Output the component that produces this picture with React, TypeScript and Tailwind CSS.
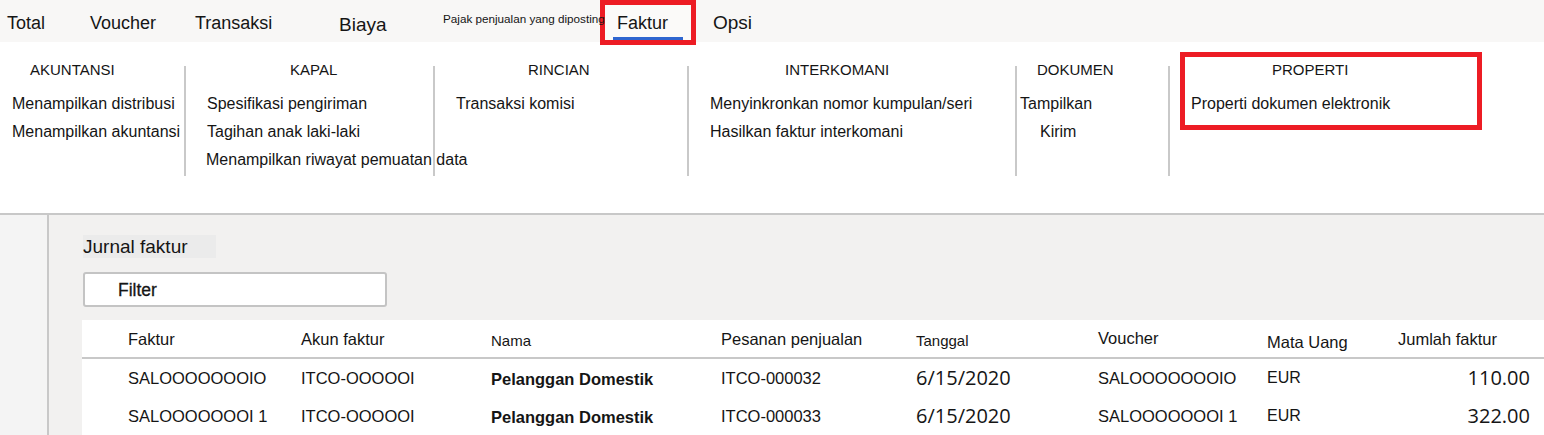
import { ReactNode } from 'react';

type Group = {
    title: string;
    width: number;
    titlePad: number;
    items: { label: string; pad: number }[];
};

const tabs = [
    { label: 'Total', w: 'w-[83px]', size: 'text-[18px] pt-[13px]' },
    { label: 'Voucher', w: 'w-[105px]', size: 'text-[18px] pt-[13px]' },
    { label: 'Transaksi', w: 'w-[144px]', size: 'text-[18px] pt-[13px]' },
    { label: 'Biaya', w: 'w-[104px]', size: 'text-[19px] pt-[15px]' },
];

const groups: Group[] = [
    {
        title: 'AKUNTANSI', width: 184, titlePad: 30,
        items: [
            { label: 'Menampilkan distribusi', pad: 12 },
            { label: 'Menampilkan akuntansi', pad: 12 },
        ],
    },
    {
        title: 'KAPAL', width: 247, titlePad: 104,
        items: [
            { label: 'Spesifikasi pengiriman', pad: 21 },
            { label: 'Tagihan anak laki-laki', pad: 21 },
            { label: 'Menampilkan riwayat pemuatan data', pad: 20 },
        ],
    },
    {
        title: 'RINCIAN', width: 252, titlePad: 93,
        items: [{ label: 'Transaksi komisi', pad: 21 }],
    },
    {
        title: 'INTERKOMANI', width: 326, titlePad: 96,
        items: [
            { label: 'Menyinkronkan nomor kumpulan/seri', pad: 21 },
            { label: 'Hasilkan faktur interkomani', pad: 21 },
        ],
    },
    {
        title: 'DOKUMEN', width: 151, titlePad: 20,
        items: [
            { label: 'Tampilkan', pad: 3 },
            { label: 'Kirim', pad: 23 },
        ],
    },
];

const columns = ['Faktur', 'Akun faktur', 'Nama', 'Pesanan penjualan', 'Tanggal', 'Voucher', 'Mata Uang', 'Jumlah faktur'];

const rows = [
    { faktur: 'SALOOOOOOOIO', akun: 'ITCO-OOOOOI', nama: 'Pelanggan Domestik', pesanan: 'ITCO-000032', tanggal: '6/15/2020', voucher: 'SALOOOOOOOIO', uang: 'EUR', jumlah: '110.00' },
    { faktur: 'SALOOOOOOOI 1', akun: 'ITCO-OOOOOI', nama: 'Pelanggan Domestik', pesanan: 'ITCO-000033', tanggal: '6/15/2020', voucher: 'SALOOOOOOOI 1', uang: 'EUR', jumlah: '322.00' },
];

function Divider() {
    return <div className="w-[2px] h-[110px] mt-[15px] bg-[#c9c9c9] shrink-0" />;
}

function Cell({ children, className = '' }: { children: ReactNode; className?: string }) {
    return <div className={`flex items-center whitespace-nowrap ${className}`}>{children}</div>;
}

export default function App() {
    const grid = 'grid grid-cols-[173px_190px_230px_195px_182px_169px_131px_132px] pl-[46px]';

    return (
        <div className="w-[1544px] h-[435px] overflow-hidden bg-white text-[#151515] font-['Liberation_Sans',Arial,sans-serif]">
            {/* tab strip */}
            <div className="h-[42px] bg-[#f8f7f6] flex items-start pl-[7px]">
                {tabs.map((t) => (
                    <div key={t.label} className={`${t.w} ${t.size} h-[42px] leading-[20px] shrink-0`}>{t.label}</div>
                ))}
                <div className="relative z-20 w-[157px] shrink-0 pt-[12px] text-[11.7px] leading-[14px] whitespace-nowrap">Pajak penjualan yang diposting</div>
                <div className="relative z-10 w-[96px] h-[45px] shrink-0 border-[5px] border-[#ed1c24] bg-[#fbfaf9] flex flex-col">
                    <div className="pl-[12px] pt-[8px] text-[18px] leading-[20px]">Faktur</div>
                    <div className="mt-auto mx-[8px] h-[3px] bg-[#2f66d0]" />
                </div>
                <div className="ml-[17px] pt-[13px] text-[19px] leading-[20px]">Opsi</div>
            </div>

            {/* ribbon */}
            <div className="h-[171px] flex items-start pt-[9px] text-[16px]">
                {groups.map((g, i) => (
                    <div key={g.title} className="flex items-start shrink-0">
                        {i > 0 && <Divider />}
                        <div className="flex flex-col pt-[9px]" style={{ width: g.width }}>
                            <div className="text-[15px] leading-[20px] uppercase" style={{ paddingLeft: g.titlePad }}>{g.title}</div>
                            <div className="mt-[10px] flex flex-col">
                                {g.items.map((it) => (
                                    <div key={it.label} className="leading-[28px] whitespace-nowrap" style={{ paddingLeft: it.pad }}>{it.label}</div>
                                ))}
                            </div>
                        </div>
                    </div>
                ))}
                <Divider />
                <div className="ml-[10px] mt-[1px] w-[302px] h-[78px] border-[5px] border-[#ed1c24] flex flex-col pt-[3px]">
                    <div className="pl-[87px] text-[15px] leading-[20px]">PROPERTI</div>
                    <div className="mt-[10px] pl-[6px] leading-[28px] whitespace-nowrap">Properti dokumen elektronik</div>
                </div>
            </div>

            {/* page body */}
            <div className="h-[222px] border-t-2 border-[#c8c8c8] bg-[#f2f1f0] flex">
                <div className="w-[49px] shrink-0 bg-[#f4f4f4] border-r-2 border-[#c8c8c8]" />
                <div className="flex-1 flex flex-col pl-[33px] pt-[20px]">
                    <div className="w-[133px] h-[23px] ml-[1px] bg-[#ebebeb] text-[19px] leading-[23px]">Jurnal faktur</div>
                    <div className="mt-[14px] ml-[1px] w-[304px] h-[35px] rounded-[3px] border-2 border-[#c4c4c4] bg-white pl-[33px] text-[17.5px] leading-[33px] [-webkit-text-stroke:0.3px_#151515]">Filter</div>
                    <div className="mt-[13px] bg-white flex-1">
                        <div className={`${grid} h-[39px] pt-[2px] border-b-2 border-[#c8c8c8] text-[16.5px]`}>
                            {columns.map((c) => (
                                <Cell
                                    key={c}
                                    className={
                                        c === 'Nama' || c === 'Tanggal' ? 'text-[15px] pt-[4px]' :
                                        c === 'Voucher' ? 'pb-[2px]' :
                                        c === 'Mata Uang' ? 'pt-[6px]' : ''
                                    }
                                >
                                    {c}
                                </Cell>
                            ))}
                        </div>
                        {rows.map((r) => (
                            <div key={r.faktur} className={`${grid} h-[38px] text-[16.5px]`}>
                                <Cell>{r.faktur}</Cell>
                                <Cell>{r.akun}</Cell>
                                <Cell className="font-bold pt-[2px]">{r.nama}</Cell>
                                <Cell>{r.pesanan}</Cell>
                                <Cell className="text-[20px] font-['Open_Sans',sans-serif]">{r.tanggal}</Cell>
                                <Cell>{r.voucher}</Cell>
                                <Cell className="text-[16px]">{r.uang}</Cell>
                                <Cell className="justify-end text-[20px] font-['Open_Sans',sans-serif]">{r.jumlah}</Cell>
                            </div>
                        ))}
                    </div>
                </div>
            </div>
        </div>
    );
}
